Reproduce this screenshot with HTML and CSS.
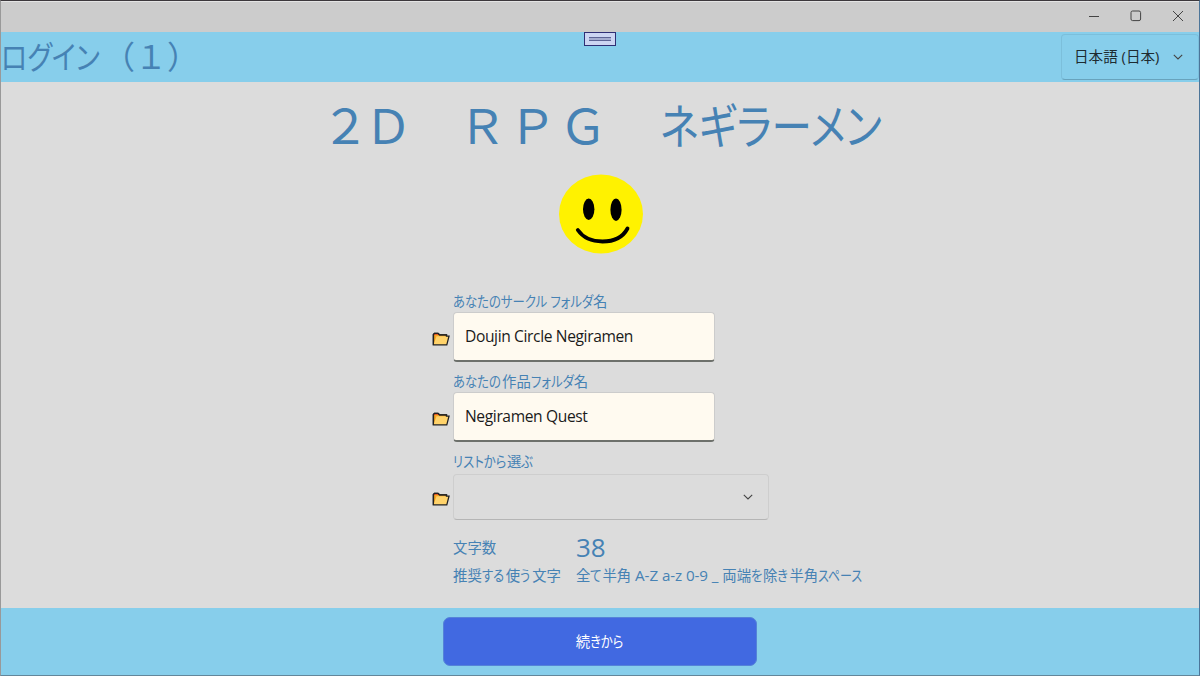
FILE: index.html
```html
<!DOCTYPE html>
<html lang="ja">

<head>
  <meta charset="UTF-8">
  <meta name="viewport" content="width=device-width, initial-scale=1.0">
  <title>ログイン（１）</title>
  <link rel="stylesheet" href="styles.css">
</head>

<body>
  <div class="window">
    <div class="titlebar">
      <svg class="caption-icon" viewBox="0 0 12 12"><path d="M1 6.5h10" /></svg>
      <svg class="caption-icon" viewBox="0 0 12 12"><rect x="1" y="1" width="9.6" height="9.6" rx="1.6" /></svg>
      <svg class="caption-icon" viewBox="0 0 12 12"><path d="M1 1l10 10M11 1L1 11" /></svg>
    </div>

    <header class="header">
      <h1 class="page-name"><span class="narrow page-kana">ログイン</span><span class="wide">（１）</span></h1>
      <div class="language">
        <span class="language-name">日本語 (日本)</span>
        <svg class="chevron" viewBox="0 0 10 6"><path d="M0.8 0.8L5 5l4.2-4.2" /></svg>
      </div>
      <div class="handle"><i></i></div>
    </header>

    <main class="main">
      <h2 class="game-title"><span class="digit">２</span><span class="dim">Ｄ　</span><span class="rpg">ＲＰＧ　</span><span class="narrow title-kana">ネギラーメン</span></h2>

      <svg class="face" viewBox="0 0 84 80">
        <ellipse cx="42" cy="40" rx="42" ry="39.6" fill="#fff200" />
        <ellipse cx="29.7" cy="35.3" rx="5.7" ry="10.7" />
        <ellipse cx="57" cy="35.7" rx="5.6" ry="11.2" />
        <path d="M18.8 56C24 63.500 32 67.500 43.500 67.500C55 67.500 64 63 68.500 54.500" fill="none" stroke="#000" stroke-width="3.800" stroke-linecap="round" />
      </svg>

      <div class="form">
        <label class="label"><span class="narrow k-circle">あなたのサークル フォルダ</span>名</label>
        <div class="row">
          <svg class="folder" viewBox="0 0 18 14"><path d="M1.500 13V2.500L2.500 1.300H6L7.500 2.800H14.500V4.500" fill="#f7a521" /><path d="M2 1.500h3.500l1 1.300H2z" fill="#e8402a" stroke="none" /><path d="M1.500 12.800L4.500 4.300H17L14.800 12.800Z" fill="#ffd36b" stroke="none" /><path d="M1.300 12.800V2.500L2.500 1.300H6L7.500 2.800H14.500V4.200H17L14.800 12.800Z" fill="none" /></svg>
          <input class="entry" type="text" value="Doujin Circle Negiramen">
        </div>

        <label class="label"><span class="narrow k-your">あなたの</span>作品<span class="narrow k-folder">フォルダ</span>名</label>
        <div class="row">
          <svg class="folder" viewBox="0 0 18 14"><path d="M1.500 13V2.500L2.500 1.300H6L7.500 2.800H14.500V4.500" fill="#f7a521" /><path d="M2 1.500h3.500l1 1.300H2z" fill="#e8402a" stroke="none" /><path d="M1.500 12.800L4.500 4.300H17L14.800 12.800Z" fill="#ffd36b" stroke="none" /><path d="M1.300 12.800V2.500L2.500 1.300H6L7.500 2.800H14.500V4.200H17L14.800 12.800Z" fill="none" /></svg>
          <input class="entry" type="text" value="Negiramen Quest">
        </div>

        <label class="label"><span class="narrow k-list">リストから</span>選<span class="narrow k-one">ぶ</span></label>
        <div class="row">
          <svg class="folder" viewBox="0 0 18 14"><path d="M1.500 13V2.500L2.500 1.300H6L7.500 2.800H14.500V4.500" fill="#f7a521" /><path d="M2 1.500h3.500l1 1.300H2z" fill="#e8402a" stroke="none" /><path d="M1.500 12.800L4.500 4.300H17L14.800 12.800Z" fill="#ffd36b" stroke="none" /><path d="M1.300 12.800V2.500L2.500 1.300H6L7.500 2.800H14.500V4.200H17L14.800 12.800Z" fill="none" /></svg>
          <div class="picker">
            <svg class="chevron" viewBox="0 0 10 6"><path d="M0.8 0.8L5 5l4.2-4.2" /></svg>
          </div>
        </div>

        <div class="info">
          <span>文字数</span>
          <span class="count">38</span>
          <span>推奨<span class="narrow k-suru">する</span>使<span class="narrow k-one">う</span>文字</span>
          <span class="hint">全<span class="narrow k-one">て</span>半角<span class="ascii"> A-Z a-z 0-9 _ </span>両端<span class="narrow k-one">を</span>除<span class="narrow k-one">き</span>半角<span class="narrow k-space">スペース</span></span>
        </div>
      </div>
    </main>

    <footer class="footer">
      <button class="continue">続<span class="narrow k-kara">きから</span></button>
    </footer>
  </div>
</body>

</html>
```
FILE: styles.css
```css
* {
  box-sizing: border-box;
}

body {
  margin: 0;
  font-family: "Open Sans", "Noto Sans CJK JP", sans-serif;
  font-size: 14.4px;
  color: #4682b4;
}

.window {
  display: flex;
  flex-direction: column;
  height: 676px;
  background-color: #dcdcdc;
  border: 1px solid #999;
  border-top-color: #3c383c;
  border-right-color: #4c7599;
  border-bottom-color: #63869a;
  overflow: hidden;
}

.titlebar {
  display: flex;
  justify-content: flex-end;
  align-items: center;
  gap: 30px;
  height: 31px;
  padding-right: 15px;
  padding-bottom: 2px;
  background-color: #ccc;
  border-top: 1px solid #e4e4e4;
}

.caption-icon {
  width: 12px;
  height: 12px;
  fill: none;
  stroke: #444;
  stroke-width: 1;
}

/* kana are set narrower than kanji */
.narrow {
  display: inline-block;
  font-feature-settings: "palt";
  white-space: pre;
  transform: scaleX(0.86);
  transform-origin: left;
}

.header {
  position: relative;
  display: flex;
  justify-content: space-between;
  align-items: center;
  height: 50px;
  background-color: #87ceeb;
}

.page-name {
  margin: 0;
  font-family: "Noto Sans CJK JP", sans-serif;
  font-size: 32px;
  font-weight: 400;
  line-height: 46px;
  height: 50px;
  white-space: nowrap;
}

.page-kana {
  width: 102px;
  transform: scaleX(0.845);
}

.language {
  display: flex;
  align-items: center;
  justify-content: space-between;
  width: 138px;
  height: 46px;
  padding: 0 15px 0 12px;
  border: 1px solid #7cbfdb;
  border-bottom-color: #68a3bd;
  border-radius: 4px;
  color: #1d2b31;
}

.language-name {
  padding-bottom: 4px;
  font-size: 14.6px;
}

.chevron {
  width: 10px;
  height: 6px;
  fill: none;
  stroke: #444;
  stroke-width: 1.1;
}

.handle {
  position: absolute;
  left: 583px;
  top: 0;
  display: flex;
  align-items: center;
  justify-content: center;
  width: 32px;
  height: 14px;
  background-color: #ccd5f2;
  border: 1px solid #2f2f75;
}

.handle i {
  width: 22px;
  height: 4px;
  background-color: #a5add0;
  border: solid #5d6495;
  border-width: 1px 0;
}

.main {
  display: flex;
  flex-direction: column;
  align-items: center;
  height: 526px;
}

.game-title {
  margin: 9px 0 0;
  height: 83px;
  font-size: 48px;
  font-weight: 400;
  line-height: 70px;
  white-space: nowrap;
}

.digit {
  letter-spacing: -5px;
}

.dim {
  letter-spacing: -1px;
}

.rpg {
  letter-spacing: 2.4px;
}

.title-kana {
  width: 219px;
  transform: scaleX(0.845);
}

.face {
  width: 84px;
  height: 80px;
  margin-left: 2px;
}

.form {
  display: flex;
  flex-direction: column;
  width: 454px;
  margin-left: 118px;
  margin-top: 37px;
}

.label {
  height: 21px;
  padding-left: 21px;
  line-height: 21px;
  white-space: nowrap;
}

.k-circle {
  width: 140px;
}

.k-your {
  width: 49px;
}

.k-folder {
  width: 43px;
}

.k-list {
  width: 54px;
}

.k-one {
  width: 12px;
}

.k-suru {
  width: 24px;
}

.k-space {
  width: 44px;
  transform: scaleX(0.83);
}

.k-kara {
  width: 34px;
  text-align: left;
}

.row {
  display: flex;
  align-items: center;
  gap: 3px;
  height: 50px;
  margin-bottom: 9px;
}

.folder {
  width: 18px;
  height: 14px;
  margin-top: 3px;
  stroke: #222;
  stroke-width: 1.3;
}

.entry {
  width: 262px;
  height: 50px;
  padding: 0 11px 2px;
  font-family: "Open Sans", sans-serif;
  font-size: 15.6px;
  letter-spacing: -0.38px;
  color: #1b1b1b;
  background-color: #fffaf0;
  border: 1px solid #ccc;
  border-bottom: 2px solid #6d706b;
  border-radius: 4px;
}

.picker {
  display: flex;
  align-items: center;
  justify-content: flex-end;
  width: 316px;
  height: 46px;
  padding-right: 15px;
  border: 1px solid #cecece;
  border-bottom-color: #b5b5b5;
  border-radius: 4px;
}

.info {
  display: grid;
  grid-template-columns: 123px auto;
  grid-template-rows: 30px 26px;
  align-items: center;
  padding-left: 21px;
  white-space: nowrap;
}

.hint {
  padding-top: 1px;
}

.ascii {
  font-size: 15.2px;
  letter-spacing: -0.08px;
  white-space: pre;
}

.count {
  padding-top: 3px;
  font-size: 26px;
  line-height: 29px;
}

.footer {
  display: flex;
  justify-content: center;
  align-items: center;
  height: 67px;
  background-color: #87ceeb;
}

.continue {
  width: 314px;
  height: 49px;
  padding-bottom: 3px;
  font-family: "Noto Sans CJK JP", sans-serif;
  font-size: 14.4px;
  color: #fff;
  background-color: #4169e1;
  border: 1px solid #5583d8;
  border-radius: 7px;
}
```
